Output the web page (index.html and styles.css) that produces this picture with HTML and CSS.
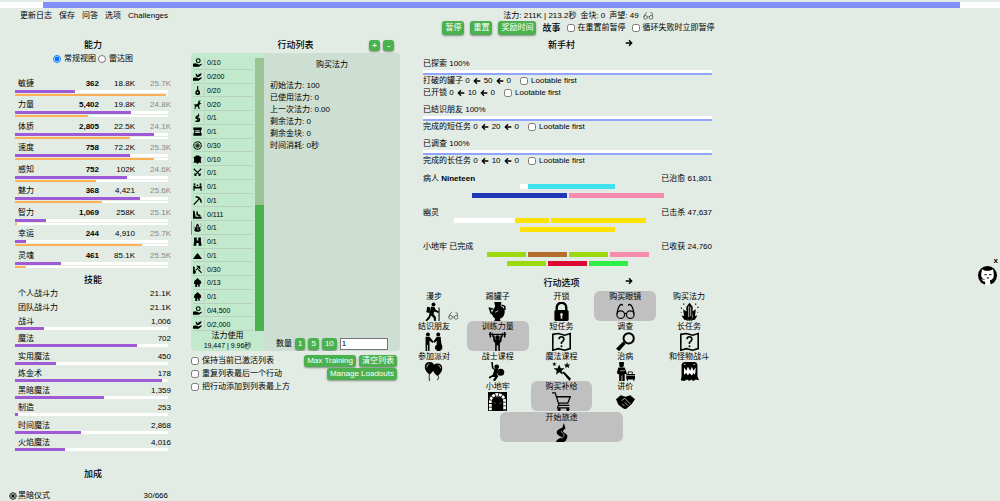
FILE: index.html
```html
<!DOCTYPE html>
<html lang="zh-CN">
<head>
<meta charset="utf-8">
<title>新手村</title>
<link rel="stylesheet" href="styles.css">
</head>
<body>
<svg class="sprite" aria-hidden="true">
  <symbol id="arrow-r" viewBox="0 0 24 24"><path d="M2 12h18M12 4l8 8-8 8" fill="none" stroke="#000" stroke-width="4"/></symbol>
  <symbol id="arrow-l" viewBox="0 0 24 24"><path d="M22 12H4M12 4l-8 8 8 8" fill="none" stroke="#000" stroke-width="4"/></symbol>
  <symbol id="glasses" viewBox="0 0 24 24"><g fill="none" stroke="#000" stroke-width="1.500"><circle cx="6" cy="16" r="4.800"/><circle cx="18" cy="16" r="4.800"/><path d="M10.800 15q1.200-1 2.400 0M1.200 15C2 10 4 4 6.500 3q2-.5 1.500 2M22.800 15C22 10 20 4 17.500 3q-2-.5-1.500 2"/></g></symbol>
  <symbol id="glasses-s" viewBox="0 0 30 24"><g fill="none" stroke="#444" stroke-width="2"><circle cx="7" cy="17" r="5"/><circle cx="22" cy="17" r="5"/><path d="M12 16q2-1 5 0M2 16Q5 6 11 3M26 13Q28 4 20 3"/></g></symbol>
  <symbol id="hiker" viewBox="0 0 24 24"><circle cx="12" cy="3" r="2.500"/><path d="M4 6l4 1-1 7-4-1zM9 6l4 0 2 4 4 2-1 2-5-2-1 3 3 4 0 5h-2l-1-4-3-3-2 4-4 4-1-2 4-5z"/><path d="M19 7v17" stroke="#000" stroke-width="1.300"/></symbol>
  <symbol id="pot" viewBox="0 0 24 24"><path d="M8 0h9l-1 5q6 3 5 9-1 6-6 7l1 3H8l1-3q-6-5-3-10 1-3 3-5z"/><path d="M17 4q6 0 4 6M6 9l-4-1 2 6 4 2" fill="none" stroke="#000" stroke-width="2"/><path d="M9 13l4-2" stroke="#e2ebe4" stroke-width="1"/></symbol>
  <symbol id="lock" viewBox="0 0 24 24"><path d="M6 11V7a6 6 0 0 1 12 0v4" fill="none" stroke="#000" stroke-width="3"/><rect x="3" y="10" width="18" height="14" rx="2"/><path d="M12 14a2 2 0 0 1 1 3.500V21h-2v-3.500A2 2 0 0 1 12 14z" fill="#e2ebe4"/></symbol>
  <symbol id="crystal" viewBox="0 0 24 24"><path d="M12 1l4 5v14l-4 4-4-4V6zM4 9l4 3 1 9-4-4zM20 9l-4 3-1 9 4-4zM2 17l5 1 4 6-6-2zM22 17l-5 1-4 6 6-2z"/><path d="M11 5v14M13.500 6v12" stroke="#bbb" stroke-width="1.200"/><path d="M4 2h1.500v1.500H4zM19 2h1.500v1.500H19zM1 7h1.500v1.500H1zM22 6h1.500v1.500H22zM1 13h1v1H1zM22 13h1v1h-1z"/></symbol>
  <symbol id="meet" viewBox="0 0 24 24"><circle cx="5" cy="3" r="2.500"/><circle cx="18" cy="3" r="2.500"/><path d="M2 6h5l5 6-1 2-4-3v13H5v-8H4v8H2zM21 6h-5l-4 6 1 2 3-3v5l-2 2v4h2v2h5v-2h2v-5l-1-2z"/></symbol>
  <symbol id="lifter" viewBox="0 0 24 24"><circle cx="12" cy="7" r="2.800"/><path d="M1 3h22" stroke="#000" stroke-width="1.500"/><path d="M2 0h2v7H2zM5 1h1v5H5zM20 0h2v7h-2zM18 1h1v5h-1zM6 4l2 0 1 5h6l1-5h2l-1 8-2 2v10h-2v-7h-2v7H9V14l-2-2z"/></symbol>
  <symbol id="map" viewBox="0 0 24 24"><path d="M1 3l7-1 8 2 7-2v19l-7 2-8-2-7 2z" fill="none" stroke="#000" stroke-width="2"/><path d="M9 9q0-3 3-3t3 3q0 2-3 4v2" fill="none" stroke="#000" stroke-width="2"/><circle cx="12" cy="18" r="1.300"/></symbol>
  <symbol id="search" viewBox="0 0 24 24"><circle cx="16" cy="8" r="6.500" fill="none" stroke="#000" stroke-width="2.500"/><path d="M9 12l3 3-8 9-4-3z"/></symbol>
  <symbol id="balloons" viewBox="0 0 24 24"><path d="M7 0q6 0 6 6 0 5-5 9H6Q1 11 1 6q0-6 6-6zM17 2q6 0 6 6 0 5-5 9h-2q-5-4-5-9 0-6 6-6z"/><path d="M7 14q-1 4 0 10M17 16q3 3 0 7" fill="none" stroke="#000"/><path d="M3.500 7q0-4 3-5M18 4q3 1 3 4" fill="none" stroke="#ddd"/></symbol>
  <symbol id="warrior" viewBox="0 0 24 24"><circle cx="11" cy="6" r="3"/><circle cx="16" cy="13" r="4.500"/><path d="M6 0l1 8 6 1-2 6 2 3-4 6-3-1 3-4-4 0-3 2-1-2 5-3 2-6-3-2-1-8z"/></symbol>
  <symbol id="wand" viewBox="0 0 24 24"><path d="M9 3l2 5h5l-4 3 2 5-5-3-4 3 1-5-4-3h5zM19 0l1 3h3l-2 2 1 3-3-2-2 2v-3l-2-2h3zM3 0l1 2h2L4 3l1 2-2-1-2 1 1-2-2-1h2zM13 13l2-1 9 9-2 3z"/></symbol>
  <symbol id="doctor" viewBox="0 0 24 24"><circle cx="7" cy="4" r="2.800"/><path d="M4 0h6v3H4zM3 7h8l3 8h-3v9H8v-7H7v7H4v-8L1 14zM13 15h11v7H13zM15 12h6v3h-1v-2h-4v2h-1zM14 22h1v2h-1zM22 22h1v2h-1z"/><path d="M13 17h11M5 11h6" stroke="#ddd" stroke-width=".8"/></symbol>
  <symbol id="monster" viewBox="0 0 24 24"><path d="M2 3q1-3 4-3h12q3 0 4 3v15l2 5-4-1-3 2-3-2-2 2-3-2-4 2-4-1 1-5z"/><path d="M5 7l3 4 2-5 3 5 2-5 2 5 3-4-1 9-2-2-2 3-3-3-2 3-2-3-3 2z" fill="#fff"/><path d="M5 3h2M17 3h2" stroke="#fff"/></symbol>
  <symbol id="dungeon" viewBox="0 0 24 24"><path d="M0 0h24v24H0z"/><path d="M3 23V12a9 9 0 0 1 18 0v11" fill="none" stroke="#fff" stroke-width="3.500" stroke-dasharray="3.500 1"/><path d="M10 6h4M8 13l1 2M16 13l-1 2" stroke="#888" stroke-width="1"/></symbol>
  <symbol id="cart" viewBox="0 0 24 24"><path d="M0 1h4l5 16h13M5 6h18l-3 8H8M8 17l-1 3h15" fill="none" stroke="#000" stroke-width="1.600"/><circle cx="9" cy="22" r="2"/><circle cx="20" cy="22" r="2"/></symbol>
  <symbol id="shake" viewBox="0 0 24 24"><path d="M0 9l6-5 6 2 6-2 6 5-4 6-7 6q-3 1-5-1l-5-4z"/><path d="M7 11l4-3 7 7M8 15l3 3M11 13l4 4" fill="none" stroke="#ddd" stroke-width="1"/></symbol>
  <symbol id="road" viewBox="0 0 24 24"><path d="M15 0l2 7q-5 3-2 5 6 3 4 7-1 4-4 5H5q1-4 8-6-8-3-7-7 1-3 7-5z"/><path d="M12 10q-2 1 3 4 2 2-3 6" fill="none" stroke="#aaa" stroke-width="1"/></symbol>
  <symbol id="coin" viewBox="0 0 24 24"><circle cx="14" cy="7" r="5" fill="none" stroke="#000" stroke-width="3"/><path d="M0 15l7-1 6 2 3 2 6-3 2 2-8 6H0z"/></symbol>
  <symbol id="herb" viewBox="0 0 24 24"><path d="M12 14Q6 10 7 4q5 1 6 6 2-7 10-7-1 8-9 10zM0 16l7-2 8 3 7-3 2 2-9 7H0z"/></symbol>
  <symbol id="guitar" viewBox="0 0 24 24"><path d="M11 0h3v10q6 3 5 9-1 5-6 5-7 0-7-6 0-5 5-8z"/><circle cx="12" cy="17" r="2" fill="#c2e9cc"/></symbol>
  <symbol id="deer" viewBox="0 0 24 24"><path d="M14 0l2 5 2-5 2 1-2 6 5 3-5 1-2 4 2 9h-3l-2-7-6 1 0 6H4l1-9-3-3 9-1 3-4z"/></symbol>
  <symbol id="gate" viewBox="0 0 24 24"><path d="M1 1h22v7H1zM3 10h18v2H3zM1 16h22v7H1zM3 8h3v10H3zM18 8h3v10h-3z"/></symbol>
  <symbol id="target" viewBox="0 0 24 24"><circle cx="12" cy="12" r="10" fill="none" stroke="#000" stroke-width="3" stroke-dasharray="5 1"/><circle cx="12" cy="12" r="5" fill="none" stroke="#000" stroke-width="2"/><path d="M9 9h6v6H9z"/></symbol>
  <symbol id="armor" viewBox="0 0 24 24"><path d="M8 1h8l2 3 5 1-2 4v9l2 3-7-1-4 4-4-4-7 1 2-4V9L1 5l5-1z"/></symbol>
  <symbol id="swords" viewBox="0 0 24 24"><path d="M2 2l18 18M22 2L4 20M15 21l6-6M9 21l-6-6" stroke="#000" stroke-width="3"/></symbol>
  <symbol id="team" viewBox="0 0 24 24"><circle cx="4" cy="6" r="2.500"/><circle cx="20" cy="6" r="2.500"/><circle cx="12" cy="9" r="2.500"/><path d="M1 9h5l2 4h8l2-4h5v14h-3v-6H4v6H1z"/></symbol>
  <symbol id="pick" viewBox="0 0 24 24"><path d="M2 23L17 7M7 2q14 1 15 16" fill="none" stroke="#000" stroke-width="3.500"/></symbol>
  <symbol id="quarry" viewBox="0 0 24 24"><path d="M0 2h4l3 16h16v5H0zM9 4h4v6l7 4v3h-4l-7-4z"/></symbol>
  <symbol id="mining" viewBox="0 0 24 24"><path d="M0 3l5 3-1 6 4 6-2 5H0z"/><path d="M7 14L19 3M10 3q6-1 9 8M14 12l9 9" fill="none" stroke="#000" stroke-width="3"/></symbol>
  <symbol id="towers" viewBox="0 0 24 24"><path d="M3 1h7v8h4V1h7v10l2 12h-8v-7H9v7H1l2-12z"/></symbol>
  <symbol id="mount" viewBox="0 0 24 24"><path d="M12 5l5 6 7 10H0l7-10z"/></symbol>
  <symbol id="head" viewBox="0 0 24 24"><path d="M12 0l4 4 5 4 1 8-4-1v8h-4v-5h-3v6H6v-9l-4 1 2-9 5-4z"/></symbol>
  <symbol id="star" viewBox="0 0 24 24"><circle cx="12" cy="12" r="10" fill="none" stroke="#000" stroke-width="2"/><path d="M12 2v20M2 12h20M5 5l14 14M19 5L5 19" stroke="#000" stroke-width="2"/><circle cx="12" cy="12" r="4"/></symbol>
  <symbol id="cat" viewBox="0 0 24 24"><circle cx="12" cy="12" r="12"/><path d="M5 4l4 2h6l4-2 1 7q0 6-5 7l1 6H9v-4q-3 0-5-4 3 2 5 1-5-1-5-6z" fill="#fff"/><path d="M8 11h3M14 11h3M11 15h3" stroke="#333" stroke-width="1.500"/></symbol>
</svg>

<div class="daybar"><div class="daybar-fill"></div></div>

<header class="columns top">
  <nav class="menu"><a href="#">更新日志</a><a href="#">保存</a><a href="#">问答</a><a href="#">选项</a><a href="#">Challenges</a></nav>
  <div class="status">
    <div class="resources"><span>法力: 211K | 213.2秒</span><span>金块: 0</span><span>声望: 49</span><svg class="i-small"><use href="#glasses-s"/></svg></div>
    <div class="controls">
      <button class="btn">暂停</button><button class="btn">重置</button><button class="btn">奖励时间</button>
      <b class="story">故事</b>
      <label><input type="checkbox">在重置前暂停</label>
      <label><input type="checkbox">循环失败时立即暂停</label>
    </div>
  </div>
</header>

<main class="columns">
  <section class="character">
    <h2>能力</h2>
    <div class="views"><label><input type="radio" name="view" checked>常规视图</label><label><input type="radio" name="view">雷达图</label></div>
    <div class="stats">
      <div class="stat"><span>敏捷</span><b>362</b><span>18.8K</span><i>25.7K</i><div class="bar"><div style="width:39%"></div></div><div class="bar soul"><div style="width:99%"></div></div></div>
      <div class="stat"><span>力量</span><b>5,402</b><span>19.8K</span><i>24.8K</i><div class="bar"><div style="width:76%"></div></div><div class="bar soul"><div style="width:48%"></div></div></div>
      <div class="stat"><span>体质</span><b>2,805</b><span>22.5K</span><i>24.1K</i><div class="bar"><div style="width:91%"></div></div><div class="bar soul"><div style="width:75%"></div></div></div>
      <div class="stat"><span>速度</span><b>758</b><span>72.2K</span><i>25.3K</i><div class="bar"><div style="width:75%"></div></div><div class="bar soul"><div style="width:91%"></div></div></div>
      <div class="stat"><span>感知</span><b>752</b><span>102K</span><i>24.6K</i><div class="bar"><div style="width:73%"></div></div><div class="bar soul"><div style="width:53%"></div></div></div>
      <div class="stat"><span>魅力</span><b>368</b><span>4,421</span><i>25.6K</i><div class="bar"><div style="width:82%"></div></div><div class="bar soul"><div style="width:57%"></div></div></div>
      <div class="stat"><span>智力</span><b>1,069</b><span>258K</span><i>25.1K</i><div class="bar"><div style="width:20%"></div></div><div class="bar soul"><div style="width:1%"></div></div></div>
      <div class="stat"><span>幸运</span><b>244</b><span>4,910</span><i>25.7K</i><div class="bar"><div style="width:7%"></div></div><div class="bar soul"><div style="width:83%"></div></div></div>
      <div class="stat"><span>灵魂</span><b>461</b><span>85.1K</span><i>25.5K</i><div class="bar"><div style="width:30%"></div></div><div class="bar soul"><div style="width:7%"></div></div></div>
    </div>
    <h2 class="skills-title">技能</h2>
    <div class="power"><span>个人战斗力</span><span>21.1K</span></div>
    <div class="power"><span>团队战斗力</span><span>21.1K</span></div>
    <div class="skills">
      <div class="skill"><span>战斗</span><span>1,006</span><div class="bar"><div style="width:19%"></div></div></div>
      <div class="skill"><span>魔法</span><span>702</span><div class="bar"><div style="width:80%"></div></div></div>
      <div class="skill"><span>实用魔法</span><span>450</span><div class="bar"><div style="width:27%"></div></div></div>
      <div class="skill"><span>炼金术</span><span>178</span><div class="bar"><div style="width:96%"></div></div></div>
      <div class="skill"><span>黑暗魔法</span><span>1,359</span><div class="bar"><div style="width:58%"></div></div></div>
      <div class="skill"><span>制造</span><span>253</span><div class="bar"><div style="width:2%"></div></div></div>
      <div class="skill"><span>时间魔法</span><span>2,868</span><div class="bar"><div style="width:43%"></div></div></div>
      <div class="skill"><span>火焰魔法</span><span>4,016</span><div class="bar"><div style="width:33%"></div></div></div>
    </div>
    <h2 class="buffs-title">加成</h2>
    <div class="buff"><svg class="i-buff"><use href="#star"/></svg><span>黑暗仪式</span><span>30/666</span></div>
  </section>

  <section class="plan">
    <div class="plan-head"><h2>行动列表</h2><div class="size-btns"><button class="btn square">+</button><button class="btn square">-</button></div></div>
    <div class="panel">
      <div class="current">
        <div class="queue-wrap">
          <ul class="queue">
            <li><svg><use href="#coin"/></svg><span>0/10</span></li>
            <li><svg><use href="#herb"/></svg><span>0/200</span></li>
            <li><svg><use href="#guitar"/></svg><span>0/20</span></li>
            <li><svg><use href="#deer"/></svg><span>0/20</span></li>
            <li><svg><use href="#road"/></svg><span>0/1</span></li>
            <li><svg><use href="#gate"/></svg><span>0/1</span></li>
            <li><svg><use href="#target"/></svg><span>0/30</span></li>
            <li><svg><use href="#armor"/></svg><span>0/10</span></li>
            <li><svg><use href="#swords"/></svg><span>0/1</span></li>
            <li><svg><use href="#team"/></svg><span>0/1</span></li>
            <li><svg><use href="#pick"/></svg><span>0/1</span></li>
            <li><svg><use href="#quarry"/></svg><span>0/111</span></li>
            <li class="active"><svg><use href="#crystal"/></svg><span>0/1</span></li>
            <li><svg><use href="#towers"/></svg><span>0/1</span></li>
            <li><svg><use href="#mount"/></svg><span>0/1</span></li>
            <li><svg><use href="#mining"/></svg><span>0/30</span></li>
            <li><svg><use href="#head"/></svg><span>0/13</span></li>
            <li><svg><use href="#head"/></svg><span>0/1</span></li>
            <li><svg><use href="#coin"/></svg><span>0/4,500</span></li>
            <li><svg><use href="#herb"/></svg><span>0/2,000</span></li>
          </ul>
          <div class="track"><div class="track-fill" style="height:46%"></div></div>
        </div>
        <div class="used"><div>法力使用</div><div class="used-num">19,447 | 9.96秒</div></div>
      </div>
      <div class="detail">
        <div class="detail-title">购买法力</div>
        <div>初始法力: 100</div><div>已使用法力: 0</div><div>上一次法力: 0.00</div><div>剩余法力: 0</div><div>剩余金块: 0</div><div>时间消耗: 0秒</div>
        <div class="amount"><label for="amount">数量</label><button class="btn">1</button><button class="btn">5</button><button class="btn">10</button><input id="amount" type="text" value="1"></div>
      </div>
    </div>
    <div class="plan-foot">
      <div class="options">
        <label><input type="checkbox">保持当前已激活列表</label>
        <label><input type="checkbox">重复列表最后一个行动</label>
        <label><input type="checkbox">把行动添加到列表最上方</label>
      </div>
      <div class="plan-btns"><button class="btn">Max Training</button><button class="btn">清空列表</button><button class="btn">Manage Loadouts</button></div>
    </div>
  </section>

  <section class="town">
    <div class="town-head"><h2>新手村</h2><svg class="i-arrow"><use href="#arrow-r"/></svg></div>
    <div class="progress">
      <div class="line explored">已探索 100%</div><div class="done"></div>
      <div class="line">打破的罐子 0 <svg><use href="#arrow-l"/></svg> 50 <svg><use href="#arrow-l"/></svg> 0<label><input type="checkbox">Lootable first</label></div>
      <div class="line">已开锁 0 <svg><use href="#arrow-l"/></svg> 10 <svg><use href="#arrow-l"/></svg> 0<label><input type="checkbox">Lootable first</label></div>
      <div class="line explored">已结识朋友 100%</div><div class="done"></div>
      <div class="line">完成的短任务 0 <svg><use href="#arrow-l"/></svg> 20 <svg><use href="#arrow-l"/></svg> 0<label><input type="checkbox">Lootable first</label></div>
      <div class="line explored">已调查 100%</div><div class="done"></div>
      <div class="line">完成的长任务 0 <svg><use href="#arrow-l"/></svg> 10 <svg><use href="#arrow-l"/></svg> 0<label><input type="checkbox">Lootable first</label></div>

      <div class="multi"><div class="multi-head"><span>病人 <b>Nineteen</b></span><span>已治愈 61,801</span></div>
        <div class="segs"><div class="seg cyan"><div style="width:92%"></div></div></div>
        <div class="segs"><div class="seg blue"><div></div></div><div class="seg pink"><div></div></div></div></div>
      <div class="multi"><div class="multi-head"><span>幽灵</span><span>已击杀 47,637</span></div>
        <div class="segs shifted"><div class="seg yellow"><div style="width:35%"></div></div><div class="seg yellow"><div></div></div></div>
        <div class="segs"><div class="seg yellow"><div></div></div></div></div>
      <div class="multi small"><div class="multi-head"><span>小地牢 已完成</span><span>已收获 24,760</span></div>
        <div class="segs"><div class="seg lime"><div></div></div><div class="seg brown"><div></div></div><div class="seg lime"><div></div></div><div class="seg pink"><div></div></div></div>
        <div class="segs"><div class="seg lime"><div></div></div><div class="seg red"><div></div></div><div class="seg green"><div></div></div></div></div>
    </div>
    <div class="town-head actions-head"><h2>行动选项</h2><svg class="i-arrow"><use href="#arrow-r"/></svg></div>
    <div class="actions">
      <button>漫步<svg><use href="#hiker"/></svg><svg class="badge"><use href="#glasses-s"/></svg></button>
      <button>踢罐子<svg><use href="#pot"/></svg></button>
      <button>开锁<svg><use href="#lock"/></svg></button>
      <button class="capped">购买眼镜<svg><use href="#glasses"/></svg></button>
      <button>购买法力<svg><use href="#crystal"/></svg></button>
      <button>结识朋友<svg><use href="#meet"/></svg></button>
      <button class="capped">训练力量<svg><use href="#lifter"/></svg></button>
      <button>短任务<svg><use href="#map"/></svg></button>
      <button>调查<svg><use href="#search"/></svg></button>
      <button>长任务<svg><use href="#map"/></svg></button>
      <button>参加派对<svg><use href="#balloons"/></svg></button>
      <button>战士课程<svg><use href="#warrior"/></svg></button>
      <button>魔法课程<svg><use href="#wand"/></svg></button>
      <button>治病<svg><use href="#doctor"/></svg></button>
      <button>和怪物战斗<svg><use href="#monster"/></svg></button>
      <button class="second">小地牢<svg><use href="#dungeon"/></svg></button>
      <button class="capped">购买补给<svg><use href="#cart"/></svg></button>
      <button>讲价<svg><use href="#shake"/></svg></button>
      <button class="capped travel">开始旅途<svg><use href="#road"/></svg></button>
    </div>
  </section>

  <aside class="repo"><button class="close">x</button><a href="#" aria-label="GitHub"><svg><use href="#cat"/></svg></a></aside>
</main>
</body>
</html>
```

FILE: styles.css
```css
* { box-sizing: border-box; }
body {
  margin: 0;
  background: #e2ebe4;
  color: #000;
  font: 8px/12px "Liberation Sans", "Noto Sans CJK SC", sans-serif;
}
.sprite { position: absolute; width: 0; height: 0; }
a { color: inherit; text-decoration: none; }
h2 { margin: 0; font-size: 9px; line-height: 13px; text-align: center; font-weight: 500; }
button { font: inherit; color: inherit; border: 0; padding: 0; background: none; }
input[type="checkbox"], input[type="radio"] { width: 8px; height: 8px; margin: 0 3px 0 0; flex: none; }
label { display: inline-flex; align-items: center; white-space: nowrap; }
svg { flex: none; }

.daybar { margin-top: 2px; height: 6px; background: #fff; }
.daybar-fill { height: 100%; margin: 0 4% 0 4.3%; background: #8090ff; }

.columns { display: grid; grid-template-columns: 156fr 232fr 317fr 280fr; padding-left: 15px; }

.btn {
  padding: 0 3px;
  border-radius: 3px;
  background: #4bb14f;
  color: #fff;
  line-height: 12px;
  box-shadow: 0 1px 2px #0006;
  white-space: nowrap;
}

/* Header */
.top { padding-top: 3px; padding-bottom: 4px; line-height: 10px; }
.menu { display: flex; gap: 7px; padding-left: 5px; white-space: nowrap; }
.status { grid-column: 3; padding-left: 34px; }
.resources { display: flex; justify-content: center; gap: 4px; white-space: nowrap; }
.i-small { width: 11px; height: 9px; }
.controls { display: flex; justify-content: center; align-items: center; gap: 6px; white-space: nowrap; }
.controls .btn { line-height: 14px; }
.story { font-size: 9px; font-weight: 500; }

/* Character column */
.views { display: flex; justify-content: center; gap: 2px; line-height: 13px; }
.stats { display: grid; grid-auto-rows: 1fr; min-height: 193px; margin-top: 13px; }
.stat { display: grid; grid-template-columns: 48fr 36fr 36fr 36fr; grid-template-rows: 12px 3px 3px; }
.stat > span:first-child, .skill > span:first-child { padding-left: 3px; }
.stat > b, .stat > i, .stat > b + span { text-align: right; }
.stat > i { font-style: normal; color: #888; }
.bar { grid-column: 1 / -1; height: 3px; margin-right: 3px; background: #fff; }
.bar > div { height: 100%; background: #9f5bd5; }
.bar.soul { height: 2px; margin-top: 1px; }
.bar.soul > div { background: #ffb055; }
.skills-title { margin-top: 3px; }
.power { display: flex; justify-content: space-between; padding-left: 3px; line-height: 14px; }
.skills { display: grid; grid-auto-rows: 1fr; min-height: 138px; margin-top: 1px; }
.skill { display: grid; grid-template-columns: 1fr auto; grid-template-rows: 11px 3px; line-height: 11px; }
.skill > span + span { padding-right: 0; }
.buffs-title { margin-top: 14px; }
.buff { display: flex; align-items: center; margin: 9px 3px 0 -6px; }
.buff span:last-child { margin-left: auto; }
.i-buff { width: 8px; height: 8px; margin-right: 1px; }

/* Action list column */
.plan { margin: 0 3px 0 20px; }
.plan-head { display: grid; grid-template-columns: 1fr auto 1fr; align-items: center; }
.plan-head h2 { grid-column: 2; }
.size-btns { display: flex; justify-content: flex-end; gap: 3px; padding-right: 6px; }
.square { width: 11px; line-height: 11px; font-weight: 700; }
.panel { display: grid; grid-template-columns: 73fr 136fr; margin-top: 1px; border-radius: 4px; overflow: hidden; background: #cddfd3; }
.current { background: #c2e9cc; padding-top: 3px; }
.queue-wrap { display: flex; justify-content: space-between; }
.queue { flex: 1; display: grid; grid-auto-rows: 1fr; min-height: 275px; margin: 0; padding: 0 2px 0 0; list-style: none; font-size: 7px; }
.queue li { display: flex; align-items: center; border-left: 1px solid transparent; padding-left: 1px; position: relative; }
.queue li::after { content: ""; position: absolute; left: 1px; right: 0; bottom: 0; border-bottom: 1px solid #b9cfc0; }
.queue li.active { border-left-color: #4bb14f; }
.queue svg { width: 9px; height: 9px; }
.queue span { margin-left: 2px; padding-left: 2px; border-left: 1px solid #b9cfc0; line-height: 9px; }
.track { display: flex; align-items: flex-end; width: 9px; margin-top: 2px; background: #9bc494; }
.track-fill { width: 100%; background: #4bb14f; }
.used { text-align: center; line-height: 10px; }
.used-num { font-size: 7px; }
.detail { display: flex; flex-direction: column; padding: 6px 12px 1px 6px; }
.detail-title { margin-bottom: 9px; padding-left: 6px; text-align: center; }
.amount { display: flex; align-items: center; gap: 3px; margin: auto 0 0 6px; }
.amount input { flex: 1; width: 0; min-width: 0; height: 12px; padding: 0 1px; border: 1px solid #767676; background: #fff; font: inherit; }
.plan-foot { display: flex; justify-content: space-between; padding: 4px 3px 0 0; }
.options { display: flex; flex-direction: column; gap: 1px; }
.plan-btns { display: flex; flex-wrap: wrap; justify-content: flex-end; align-content: flex-start; gap: 1px 3px; flex: 1; }

/* Town column */
.town-head { display: grid; grid-template-columns: 1fr 38% 1fr; column-gap: 3px; }
.town-head h2 { grid-column: 2; }
.i-arrow { width: 8px; height: 8px; }
.progress { padding: 6px 8px 0 20px; }
.line { display: flex; align-items: center; gap: 3px; white-space: nowrap; }
.line svg { width: 8px; height: 8px; }
.line label { margin-left: 6px; }
.line ~ .explored { margin-top: 5px; }
.done { height: 5px; border-top: 3px solid #fff; background: #8fa5ff; }
.multi { margin-top: 9px; }
.line + .multi { margin-top: 6px; }
.multi-head { display: flex; justify-content: space-between; line-height: 11px; }
.segs { display: flex; justify-content: center; gap: 2px; }
.segs + .segs { margin-top: 4px; }
.shifted { padding-right: 36px; }
.seg { display: flex; justify-content: flex-end; flex: 0 1 95px; height: 5px; background: #fff; }
.small .seg { flex-basis: 39px; }
.seg > div { width: 100%; }
.cyan > div { background: #3ee2ec; }
.blue > div { background: #2038b8; }
.pink > div { background: #f78cb0; }
.yellow > div { background: #fce400; }
.lime > div { background: #9bd911; }
.brown > div { background: #b36d2d; }
.red > div { background: #dc0a32; }
.green > div { background: #30ee48; }
.actions-head { margin-top: 11px; }
.actions { display: grid; grid-template-columns: repeat(5, 1fr); column-gap: 2px; margin-top: 1px; }
.actions button { position: relative; display: flex; flex-direction: column; align-items: center; height: 30px; border-radius: 6px; line-height: 11px; white-space: nowrap; }
.actions svg { width: 19px; height: 19px; }
.actions .badge { position: absolute; right: 6px; bottom: 1px; width: 11px; height: 9px; }
.actions .capped { background: #c0c0c0; }
.actions .second { grid-column: 2; }
.actions .travel { grid-column: 2 / 5; justify-self: center; width: 65%; margin-top: 1px; }

/* Repository link */
.repo { align-self: center; display: flex; flex-direction: column; align-items: flex-end; padding-right: 3px; }
.close { font-weight: 700; line-height: 10px; margin-right: -1px; }
.repo svg { display: block; width: 19px; height: 19px; }
```
